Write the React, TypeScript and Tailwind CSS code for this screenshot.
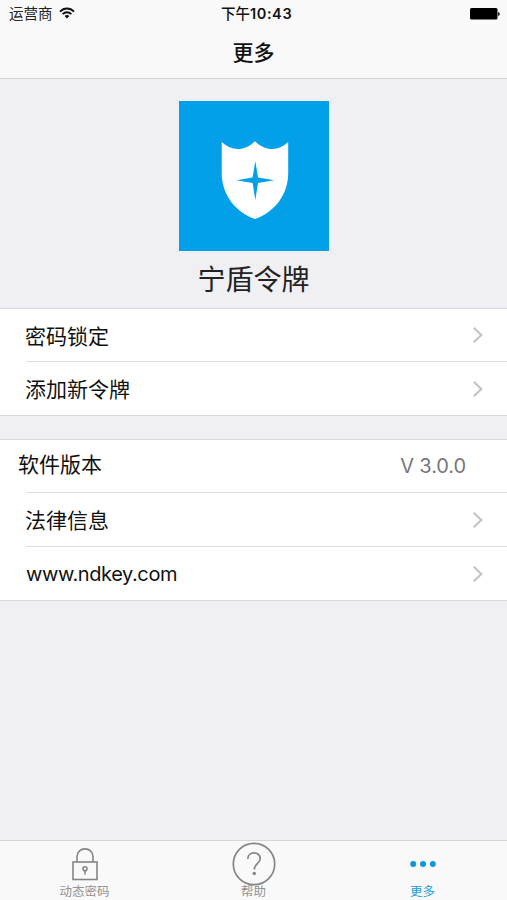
import type { ReactNode } from 'react';

const StatusBar = () => (
  <div className="relative flex h-7 items-center justify-between pl-[9px] pr-[7px] text-[14.5px] leading-7">
    <div className="flex items-center gap-[6px]">
      <span className="text-[#222]">运营商</span>
      <svg width="16" height="12" viewBox="0 0 16 12" fill="none" stroke="#111" strokeWidth="1.9" className="-mt-[2px]">
        <path d="M1 4.6C5 .5 11 .5 15 4.6" />
        <path d="M3.6 7.2C6.2 4.6 9.8 4.6 12.4 7.2" />
        <path d="M5.6 8.9C7 7.6 9 7.6 10.4 8.9L8 11.5Z" fill="#111" stroke="none" />
      </svg>
    </div>
    <span className="absolute left-[221px] top-0 whitespace-nowrap font-medium">
      下午<span className="font-semibold tracking-[0.6px]">10:43</span>
    </span>
    <svg width="30" height="12" viewBox="0 0 30 12" className="-mt-px">
      <rect x="0" y="0" width="27.5" height="11.5" rx="1.5" fill="#000" />
      <path d="M28.2 4C30.2 4.6 30.2 7.4 28.2 8Z" fill="#000" />
    </svg>
  </div>
);

const AppLogo = () => (
  <svg width="150" height="150" viewBox="0 0 150 150" className="bg-[#02a0e9]">
    <path
      d="M42.7 41C53 51 66 50 76 40.2C86 50 99 51 109.2 41V72C109.2 95 94 112 76 118C58 112 42.7 95 42.7 72Z"
      fill="#fff"
    />
    <path
      d="M76.3 60L79 76.6L95.3 79.3L79 82L76.3 99L73.6 82L57.5 79.3L73.6 76.6Z"
      fill="#02a0e9"
    />
  </svg>
);

const Chevron = () => (
  <svg width="12" height="18" viewBox="0 0 12 18" fill="none" stroke="#c4c4c8" strokeWidth="2.2">
    <path d="M1.8 1.8L9.3 9L1.8 16.2" />
  </svg>
);

interface RowProps {
  label: string;
  height: string;
  divider?: boolean;
  latin?: boolean;
}

const Row = ({ label, height, divider, latin }: RowProps) => (
  <div className="pl-[26px]">
    <div
      className={`flex items-center justify-between pr-[23px] ${height} ${
        divider ? 'border-b border-[#dfdfe2]' : ''
      }`}
    >
      <span className={latin ? 'text-[20px] tracking-[-0.4px]' : '-ml-px pt-[3px]'}>{label}</span>
      <Chevron />
    </div>
  </div>
);

const Group = ({ children }: { children: ReactNode }) => (
  <div className="border-y border-[#d9d9dd] bg-white text-[21px] leading-[30px]">{children}</div>
);

interface TabProps {
  label: string;
  active?: boolean;
  children: ReactNode;
}

const Tab = ({ label, active, children }: TabProps) => (
  <div
    className={`flex flex-1 flex-col items-center text-[12.5px] leading-[14px] ${
      active ? 'text-[#189bdc]' : 'text-[#929292]'
    }`}
  >
    <div className="flex h-[44px] items-center justify-center pt-px">{children}</div>
    <span>{label}</span>
  </div>
);

const App = () => {
  return (
    <div className="flex h-[900px] w-[507px] flex-col overflow-hidden bg-[#efeff4] font-['Inter','Noto_Sans_CJK_SC',sans-serif] text-[#111]">
      <header className="h-[79px] border-b border-[#d5d5d8] bg-[#f9f9f9]">
        <StatusBar />
        <h1 className="pt-[10px] text-center text-[21px] font-medium leading-[30px]">更多</h1>
      </header>

      <main className="flex-1">
        <div className="flex h-[229px] flex-col items-center pt-[22px]">
          <AppLogo />
          <p className="mt-[9px] text-[28px] leading-[40px] text-[#222]">宁盾令牌</p>
        </div>

        <Group>
          <Row label="密码锁定" height="h-[53px]" divider />
          <Row label="添加新令牌" height="h-[53px]" />
        </Group>

        <div className="h-[23px]" />

        <Group>
          {/* version row has no chevron and sits a bit further left */}
          <div className="flex h-[52px] items-center justify-between pl-[18px] pr-[41px]">
            <span className="-mt-0.5">软件版本</span>
            <span className="text-[20px] tracking-[-0.1px] text-[#77777a]">V 3.0.0</span>
          </div>
          <div className="ml-[26px] h-px bg-[#dfdfe2]" />
          <Row label="法律信息" height="h-[54px]" divider />
          <Row label="www.ndkey.com" height="h-[53px]" latin />
        </Group>
      </main>

      <nav className="flex h-[60px] border-t border-[#d5d5da] bg-[#f9f9f9]">
        <Tab label="动态密码">
          <svg width="28" height="36" viewBox="0 0 28 36" fill="none" stroke="#858585" strokeWidth="1.6">
            <rect x="2" y="16" width="24" height="17.5" />
            <path d="M6 16V11C6 .2 22 .2 22 11V16" />
            <circle cx="14" cy="22.8" r="2" />
            <path d="M14 25V28.5" />
          </svg>
        </Tab>
        <Tab label="帮助">
          <svg width="44" height="44" viewBox="0 0 44 44" fill="none" stroke="#858585" strokeWidth="1.7">
            <circle cx="22" cy="22" r="20.7" />
            <path d="M15.8 17C15.8 8.8 28.2 8.8 28.2 16.7C28.2 21.3 22.3 21.5 22.3 27.5" />
            <circle cx="22.3" cy="31.5" r="1.7" fill="#858585" stroke="none" />
          </svg>
        </Tab>
        <Tab label="更多" active>
          <svg width="28" height="8" viewBox="0 0 28 8" fill="#1296db">
            <circle cx="4.2" cy="4" r="3" />
            <circle cx="14" cy="4" r="3" />
            <circle cx="23.8" cy="4" r="3" />
          </svg>
        </Tab>
      </nav>
    </div>
  );
};

export default App;
